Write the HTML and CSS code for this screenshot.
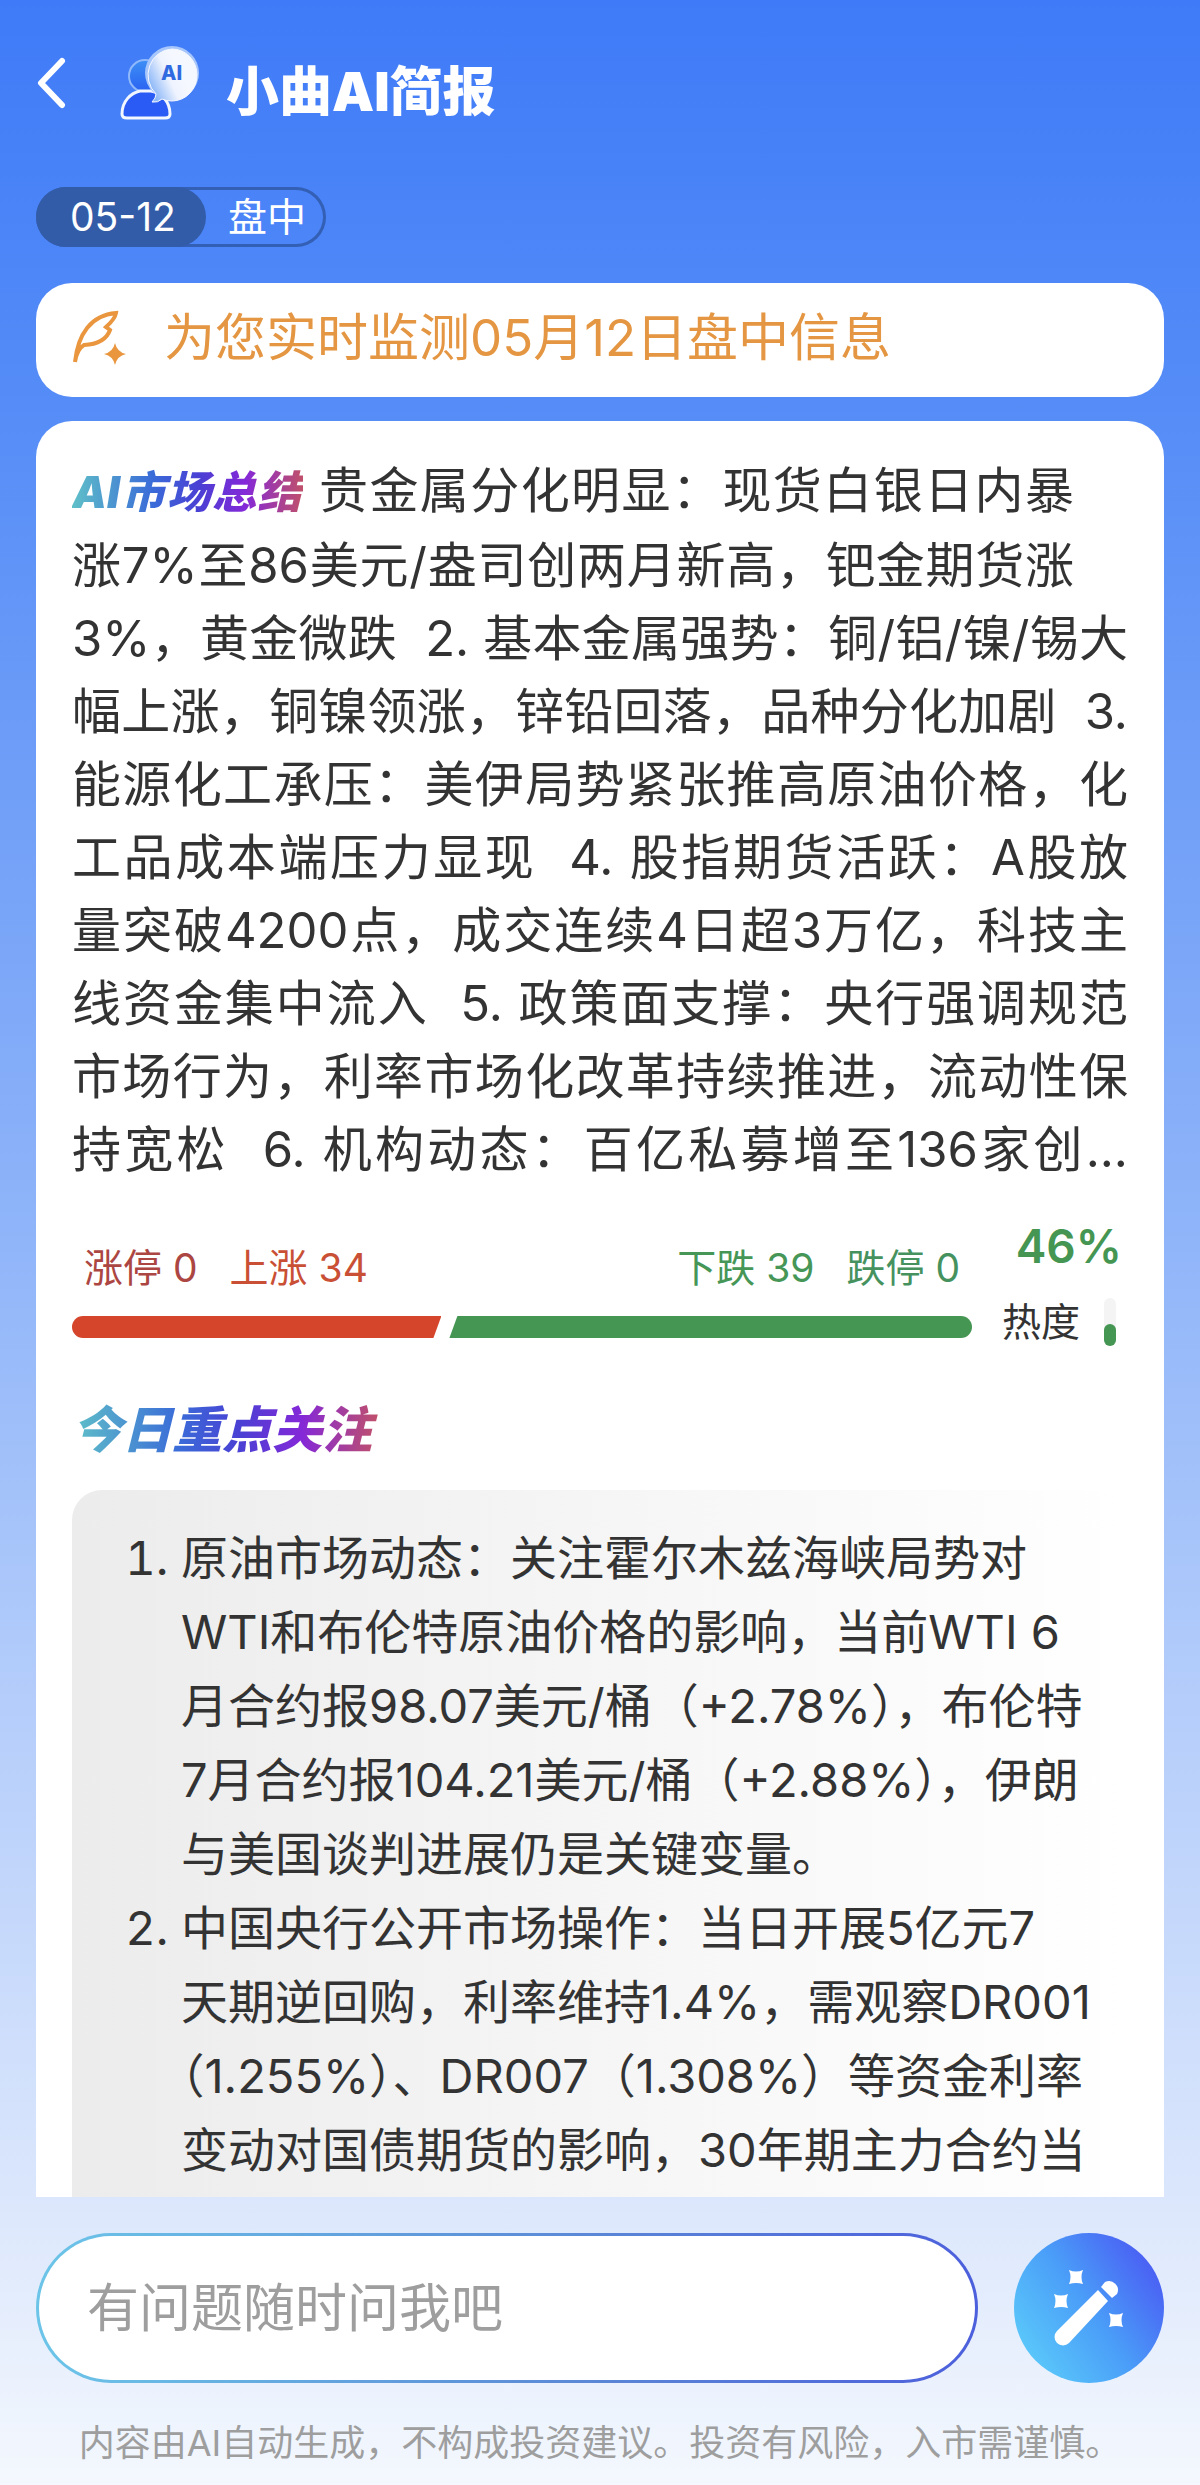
FILE: index.html
```
<!DOCTYPE html>
<html lang="zh-CN">

<head>
    <meta charset="UTF-8">
    <meta name="viewport" content="width=device-width, initial-scale=1">
    <title>小曲AI简报</title>
    <link rel="stylesheet" href="styles.css">
</head>

<body>

    <header class="header">
        <button class="back" type="button" aria-label="返回">
            <svg width="30" height="52" viewBox="0 0 30 52">
                <path d="M26 4 L5 26 L26 48" fill="none" stroke="#fff" stroke-width="6" stroke-linecap="round" stroke-linejoin="round" />
            </svg>
        </button>
        <svg class="logo" width="80" height="76" viewBox="0 0 80 76">
            <defs>
                <linearGradient id="head" x1="0" y1="0" x2="0" y2="1">
                    <stop offset="0" stop-color="#3d8ff5" />
                    <stop offset="1" stop-color="#2a62f2" />
                </linearGradient>
                <linearGradient id="bubble" x1="0" y1="0.6" x2="0.6" y2="0.3">
                    <stop offset="0" stop-color="#8db8f8" />
                    <stop offset="0.6" stop-color="#eef3fe" />
                    <stop offset="1" stop-color="#f6f8ff" />
                </linearGradient>
            </defs>
            <circle cx="25" cy="31" r="16" fill="url(#head)" stroke="#8fb9fa" stroke-width="2" />
            <path d="M2 69 C2 56 11 48 20 46 H31 C42 48 50 57 50 69 Q50 73 45 73 H7 Q2 73 2 69 Z" fill="#2a5cf5" stroke="#f2f6ff" stroke-width="3" />
            <circle cx="52" cy="28" r="27" fill="#a7c6fb" />
            <path d="M52 4 A25 26 0 0 1 52 56 Q46 56 42 54 Q38 58 32 57 Q36 53 36 49 A25 26 0 0 1 52 4 Z" fill="url(#bubble)" stroke="#f6f8ff" />
            <text class="logo-text" x="41" y="35">AI</text>
        </svg>
        <h1 class="title">小曲AI简报</h1>
    </header>

    <div class="session">
        <span class="session-date">05-12</span>
        <span class="session-name">盘中</span>
    </div>

    <div class="notice">
        <svg width="56" height="56" viewBox="0 0 56 56">
            <path d="M3 52 C6 24 19 5 44 3 Q43 9 34 17 L38 20 Q33 34 12 35 Q5 39 3 52" fill="none" stroke="#e9963f" stroke-width="4" />
            <path d="M43 33 Q45 42 54 44 Q45 46 43 55 Q41 46 32 44 Q41 42 43 33 Z" fill="#e9963f" />
        </svg>
        <span>为您实时监测05月12日盘中信息</span>
    </div>

    <main class="card">
        <div class="summary">
            <p class="summary-lead">
                <strong class="summary-tag">AI市场总结</strong>贵金属分化明显：现货白银日内暴<br>
                涨7%至86美元/盎司创两月新高，钯金期货涨
            </p>
            <p>
                3%，黄金微跌&nbsp; 2. 基本金属强势：铜/铝/镍/锡大<br>
                幅上涨，铜镍领涨，锌铅回落，品种分化加剧&nbsp; 3.<br>
                能源化工承压：美伊局势紧张推高原油价格，化<br>
                工品成本端压力显现&nbsp; 4. 股指期货活跃：A股放<br>
                量突破4200点，成交连续4日超3万亿，科技主<br>
                线资金集中流入&nbsp; 5. 政策面支撑：央行强调规范<br>
                市场行为，利率市场化改革持续推进，流动性保<br>
                持宽松&nbsp; 6. 机构动态：百亿私募增至136家创...
            </p>
        </div>

        <div class="market">
            <div class="breadth">
                <div class="counts">
                    <span class="limit-up">涨停 0</span>
                    <span class="up">上涨 34</span>
                    <span class="down">下跌 39</span>
                    <span class="limit-down">跌停 0</span>
                </div>
                <div class="bars">
                    <div class="bar bar-up"></div>
                    <div class="bar bar-down"></div>
                </div>
            </div>
            <div class="heat">
                <div class="heat-value">46%</div>
                <div class="heat-row">
                    <span>热度</span>
                    <div class="heat-track">
                        <div class="heat-fill" style="height: 46%"></div>
                    </div>
                </div>
            </div>
        </div>

        <h2 class="focus-title">今日重点关注</h2>

        <ol class="focus">
            <li>原油市场动态：关注霍尔木兹海峡局势对<br>
                WTI和布伦特原油价格的影响，当前WTI 6<br>
                月合约报98.07美元/桶（+2.78%），布伦特<br>
                7月合约报104.21美元/桶（+2.88%），伊朗<br>
                与美国谈判进展仍是关键变量。</li>
            <li>中国央行公开市场操作：当日开展5亿元7<br>
                天期逆回购，利率维持1.4%，需观察DR001<br>
                （1.255%）、DR007（1.308%）等资金利率<br>
                变动对国债期货的影响，30年期主力合约当</li>
        </ol>
    </main>

    <footer class="footer">
        <form class="ask">
            <input class="ask-input" type="text" placeholder="有问题随时问我吧" aria-label="提问">
            <button class="ask-button" type="button" aria-label="智能提问">
                <svg width="80" height="80" viewBox="0 0 80 80">
                    <g fill="#fff">
                        <path d="M49 22 L59 33 L20 75 A8 8 0 0 1 8 63 Z" />
                        <path d="M52 19 L56 14 A9 9 0 0 1 68 26 L63 30 Z" />
                        <path id="spark" d="M20 2 Q27 5 34 2 Q31 9 34 16 Q27 14 20 16 Q23 9 20 2 Z" />
                        <use href="#spark" x="-15" y="24" />
                        <use href="#spark" x="40" y="43" />
                    </g>
                </svg>
            </button>
        </form>
        <p class="disclaimer">内容由AI自动生成，不构成投资建议。投资有风险，入市需谨慎。</p>
    </footer>

</body>

</html>
```
FILE: styles.css
```
* {
    box-sizing: border-box;
}

body {
    margin: 0;
    padding: 0 36px;
    min-height: 100vh;
    display: flex;
    flex-direction: column;
    font-family: Inter, "Noto Sans CJK SC", sans-serif;
    color: #333;
    background: linear-gradient(#3f7bf8 0%, #568df7 17%, #90b5f9 50%, #dae6fc 88%, #f4f8fe 100%);
}

button {
    padding: 0;
    border: none;
    background: none;
    cursor: pointer;
}

h1,
h2,
p,
ol {
    margin: 0;
}

.header {
    display: flex;
    align-items: center;
    height: 180px;
    padding-bottom: 14px;
}

.back {
    display: flex;
    width: 30px;
    margin-right: 54px;
}

.logo-text {
    font-size: 20px;
    font-weight: 800;
    fill: #2f6ae0;
}

.title {
    margin-left: 26px;
    padding-top: 18px;
    font-size: 53px;
    line-height: 60px;
    font-weight: 900;
    color: #fff;
}

.session {
    display: flex;
    align-self: flex-start;
    align-items: center;
    margin-top: 7px;
    border-radius: 30px;
    box-shadow: inset 0 0 0 3px #335fb4;
    font-size: 39px;
    line-height: 60px;
    color: #fff;
}

.session-date {
    padding: 0 30px 0 34px;
    border-radius: 30px;
    background: #335ca8;
}

.session-name {
    padding: 0 20px 0 22px;
}

.notice {
    display: flex;
    align-items: center;
    gap: 36px;
    height: 114px;
    margin-top: 36px;
    padding: 0 36px 4px;
    border-radius: 36px;
    background: #fff;
    font-size: 51px;
    line-height: 72px;
    color: #e49642;
}

.card {
    flex: 1;
    display: flex;
    flex-direction: column;
    margin-top: 24px;
    padding: 33px 36px 0;
    border-radius: 36px 36px 0 0;
    background: #fff;
}

.summary {
    font-size: 49px;
    line-height: 73px;
    text-align: justify;
    text-align-last: justify;
}

.summary-lead {
    padding-right: 54px;
}

.summary-tag,
.focus-title {
    font-style: italic;
    font-weight: 900;
    color: transparent;
    background: linear-gradient(90deg, #5fc0c8 0%, #3a6bd8 35%, #4a40d4 55%, #8428d8 75%, #c0506a 100%);
    -webkit-background-clip: text;
    background-clip: text;
}

.summary-tag {
    margin-right: 16px;
    font-size: 44px;
}

.market {
    display: flex;
    gap: 30px;
    margin-top: 30px;
}

.breadth {
    flex: 1;
}

.counts {
    display: flex;
    gap: 32px;
    padding: 22px 12px 0;
    font-size: 39px;
    line-height: 60px;
}

.limit-up {
    color: #ac4642;
}

.up {
    color: #c94f35;
}

.down {
    margin-left: auto;
    color: #469657;
}

.limit-down {
    color: #46925f;
}

.bars {
    display: flex;
    margin-top: 18px;
}

.bar {
    height: 22px;
}

.bar-up {
    flex: 41;
    border-radius: 11px 0 0 11px;
    background: #d4452b;
    clip-path: polygon(0 0, 100% 0, calc(100% - 8px) 100%, 0 100%);
}

.bar-down {
    flex: 58;
    margin-left: 8px;
    border-radius: 0 11px 11px 0;
    background: #459553;
    clip-path: polygon(8px 0, 100% 0, 100% 100%, 0 100%);
}

.heat-value {
    padding-right: 6px;
    font-size: 46px;
    line-height: 60px;
    font-weight: 600;
    text-align: right;
    color: #459553;
}

.heat-row {
    display: flex;
    align-items: center;
    gap: 24px;
    margin-top: 16px;
    padding-right: 12px;
    font-size: 39px;
    line-height: 60px;
}

.heat-track {
    display: flex;
    align-items: flex-end;
    width: 12px;
    height: 48px;
    border-radius: 6px;
    background: #f4f4f4;
}

.heat-fill {
    width: 100%;
    border-radius: 6px;
    background: #459553;
}

.focus-title {
    align-self: flex-start;
    margin-top: 42px;
    padding-right: 6px;
    font-size: 50px;
    line-height: 72px;
}

.focus {
    flex: 1;
    margin-top: 24px;
    padding: 31px 36px 0 109px;
    border-radius: 30px 30px 0 0;
    background: linear-gradient(90deg, #ececec, #fff);
    font-size: 47px;
    line-height: 74px;
    white-space: nowrap;
    text-spacing-trim: trim-start;
}

.footer {
    padding: 36px 0 12px;
}

.ask {
    display: flex;
    gap: 36px;
}

.ask-input {
    flex: 1;
    min-width: 0;
    height: 150px;
    padding: 0 48px;
    border: 3px solid transparent;
    border-radius: 75px;
    background: linear-gradient(#fff, #fff) padding-box, linear-gradient(90deg, #6cc5e8, #5a86d6 60%, #4c5fdc) border-box;
    font-family: inherit;
    font-size: 52px;
    color: #333;
}

.ask-input::placeholder {
    color: #9e9e9e;
}

.ask-button {
    display: flex;
    align-items: center;
    justify-content: center;
    width: 150px;
    height: 150px;
    border-radius: 50%;
    background: linear-gradient(55deg, #5bcafa 10%, #4a9df8 50%, #4a63f4 85%);
}

.disclaimer {
    margin-top: 30px;
    font-size: 36px;
    line-height: 60px;
    text-align: center;
    white-space: nowrap;
    color: #9e9e9e;
}
```
